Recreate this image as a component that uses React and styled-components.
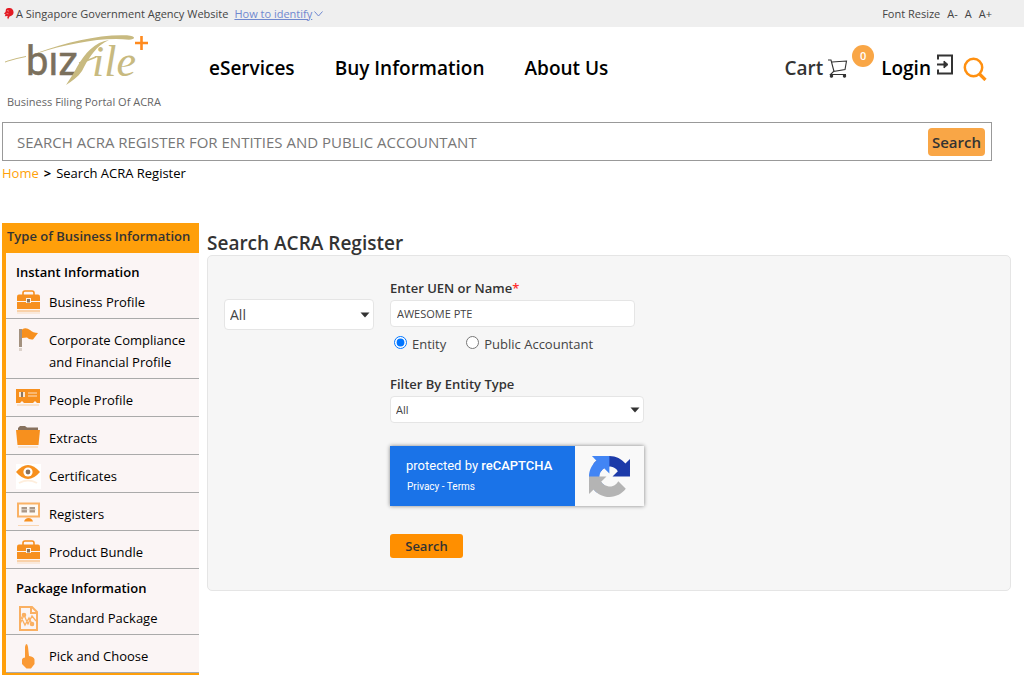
import styled, { createGlobalStyle } from "styled-components";
import { useState } from "react";

const COLOR = {
    Orange: "#ff9f0a",
    Button: "#ff8f00",
    Badge: "#f9a646",
    Icon: "#f7901e",
    Dark: "#333333",
    Pink: "#fbf5f5",
    Panel: "#f6f6f6",
    Line: "#e5e5e5",
};

const BASE_FONT = `"Open Sans", "Noto Sans", sans-serif`;

const GlobalStyle = createGlobalStyle`
    * {
        box-sizing: border-box;
    }
    body {
        margin: 0;
        background-color: #ffffff;
        color: #000000;
        font-family: ${BASE_FONT};
        font-size: 13px;
    }
    button, input, select {
        font-family: inherit;
    }
    a {
        color: inherit;
        text-decoration: none;
    }
`;

//top bar
const TopBar = styled.div`
    display: flex;
    justify-content: space-between;
    align-items: center;
    height: 27px;
    padding: 0 32px 0 4px;
    background-color: #efefef;
    color: #444444;
    font-size: 11px;
`;
const AgencyText = styled.div`
    display: flex;
    align-items: center;
    gap: 2px;
    line-height: 20px;
`;
const IdentifyLink = styled.a`
    display: flex;
    align-items: center;
    gap: 2px;
    margin-left: 4px;
    color: #6f88cf;

    span {
        text-decoration: underline;
    }
`;
const ResizeBox = styled.div`
    display: flex;
    align-items: center;
    gap: 7px;
`;
const ResizeButton = styled.button`
    padding: 0;
    border: none;
    background: none;
    color: inherit;
    font-size: 11px;
    cursor: pointer;
`;

//header
const Header = styled.header`
    display: flex;
    align-items: flex-start;
    height: 95px;
    padding: 8px 36px 0 5px;
`;
const Brand = styled.a`
    display: block;
    width: 204px;
    color: #666666;
    font-size: 11px;
    line-height: 16px;

    svg {
        display: block;
        margin-bottom: 8px;
    }
    span {
        padding-left: 2px;
    }
`;
const Nav = styled.nav`
    display: flex;
    flex: 1;
    gap: 40px;
    padding-top: 19px;
    font-size: 19px;
    font-weight: 600;
    line-height: 28px;
`;
const Tools = styled.div`
    display: flex;
    align-items: center;
    padding-top: 19px;
    font-size: 19px;
    font-weight: 600;
    line-height: 28px;
`;
const CartLink = styled.a`
    display: flex;
    align-items: center;
    gap: 5px;
    position: relative;
    margin-right: 33px;
    color: ${COLOR.Dark};
`;
const CartBadge = styled.span`
    position: absolute;
    top: -9px;
    right: -26px;
    width: 22px;
    height: 22px;
    border-radius: 11px;
    background-color: ${COLOR.Badge};
    color: #ffffff;
    font-size: 11px;
    line-height: 22px;
    text-align: center;
`;
const LoginLink = styled.a`
    display: flex;
    align-items: center;
    gap: 5px;
`;
const IconButton = styled.button`
    display: flex;
    margin-left: 9px;
    padding: 0;
    border: none;
    background: none;
    cursor: pointer;
`;

//register search
const SearchForm = styled.form`
    display: flex;
    align-items: center;
    height: 39px;
    margin: 0 32px 0 2px;
    padding-right: 6px;
    border: 1px solid #999999;
`;
const SearchInput = styled.input`
    flex: 1;
    height: 36px;
    padding: 0 14px;
    border: none;
    outline: none;
    background: none;
    font-size: 15px;

    &::placeholder {
        color: #777777;
        opacity: 1;
    }
`;
const SearchButton = styled.button`
    height: 28px;
    padding: 0 4px;
    border: none;
    border-radius: 4px;
    background-color: ${COLOR.Badge};
    color: ${COLOR.Dark};
    font-size: 15px;
    font-weight: 600;
    cursor: pointer;
`;
const Breadcrumb = styled.nav`
    display: flex;
    gap: 5px;
    margin-bottom: 40px;
    padding: 2px 2px 0;
    line-height: 20px;

    a {
        color: ${COLOR.Orange};
    }
    b {
        font-weight: 700;
    }
`;

//page body
const Columns = styled.div`
    display: flex;
    align-items: flex-start;
    gap: 8px;
    padding: 0 13px 0 2px;
`;
const SideBar = styled.aside`
    flex: 0 0 197px;
    border-left: 4px solid ${COLOR.Orange};
    border-bottom: 2px solid ${COLOR.Orange};
    background-color: ${COLOR.Pink};
`;
const SideTitle = styled.h2`
    margin: 0 0 0 -4px;
    padding: 0 0 4px 5px;
    background-color: ${COLOR.Orange};
    color: ${COLOR.Dark};
    font-size: 13px;
    font-weight: 600;
    line-height: 26px;
    white-space: nowrap;
`;
const GroupTitle = styled.h3`
    margin: 0;
    padding: 10px 0 0 10px;
    font-size: 13px;
    font-weight: 600;
    line-height: 18px;
`;
const SideItem = styled.a`
    display: flex;
    align-items: flex-start;
    gap: 8px;
    padding: 10px 8px 5px 10px;
    border-bottom: 1px solid #aaaaaa;
    line-height: 22px;

    svg {
        flex: none;
        margin: -1px 0 -2px;
    }
`;
const Main = styled.main`
    flex: 1;
`;
const PageTitle = styled.h1`
    margin: 8px 0 0;
    color: ${COLOR.Dark};
    font-size: 19px;
    font-weight: 600;
    line-height: 24px;
`;
const Panel = styled.form`
    display: grid;
    grid-template-columns: 150px minmax(0, 254px);
    gap: 16px;
    align-items: start;
    padding: 22px 16px 32px;
    border: 1px solid ${COLOR.Line};
    border-radius: 5px;
    background-color: ${COLOR.Panel};
    color: #444444;
`;
const SelectBox = styled.div`
    position: relative;
    margin-top: ${props => props.$top || "0"};

    svg {
        position: absolute;
        top: calc(50% - 3px);
        right: 4px;
        pointer-events: none;
    }
`;
const Select = styled.select`
    display: block;
    appearance: none;
    width: 100%;
    height: ${props => props.$height};
    padding: 0 20px 0 5px;
    border: 1px solid ${COLOR.Line};
    border-radius: 4px;
    background-color: #ffffff;
    color: #444444;
    font-size: ${props => props.$size};
`;
const FieldLabel = styled.label`
    display: block;
    padding-bottom: 2px;
    color: ${COLOR.Dark};
    font-size: 13px;
    font-weight: 600;
    line-height: 20px;

    span {
        color: #ff3030;
    }
`;
const NameInput = styled.input`
    display: block;
    width: 245px;
    height: 27px;
    padding: 0 6px;
    border: 1px solid ${COLOR.Line};
    border-radius: 4px;
    color: #444444;
    font-size: 11px;
`;
const RadioRow = styled.div`
    display: flex;
    gap: 20px;
    margin: 6px 0 19px;
    font-size: 13px;
    line-height: 22px;

    label {
        display: flex;
        gap: 5px;
    }
    input {
        width: 13px;
        height: 13px;
        margin: 3px 0 0 4px;
    }
    label + label input {
        margin-left: 0;
    }
`;
const Captcha = styled.div`
    display: flex;
    height: 60px;
    margin: 23px 0 28px;
    background-color: #f9f9f9;
    box-shadow: 0 0 4px #808080;
    font-family: Roboto, sans-serif;
`;
const CaptchaText = styled.div`
    flex: 1;
    padding: 9px 16px;
    background-color: #1a73e8;
    color: #ffffff;
    font-size: 13px;
    line-height: 21px;

    b {
        font-weight: 500;
    }
    div {
        padding-left: 1px;
        font-size: 10px;
    }
`;
const CaptchaLogo = styled.div`
    display: flex;
    justify-content: center;
    align-items: center;
    width: 69px;
`;
const SubmitButton = styled.button`
    width: 73px;
    height: 24px;
    padding: 0;
    border: none;
    border-radius: 3px;
    background-color: ${COLOR.Button};
    color: ${COLOR.Dark};
    font-size: 13px;
    font-weight: 600;
    cursor: pointer;
`;

function Lion() {
    return (
        <svg width="10" height="12" viewBox="0 0 10 12" aria-hidden="true">
            <path d="M2 1 Q5 -1 8 .8 Q10.500 3.500 9 6.500 Q7.500 8 5.500 8.500 L4 11.500 L3.200 9 L4 8 L.8 8.200 L1.500 6.500 L0 5.500 L1.500 4 Z" fill="#e31b23" />
            <path d="M3 2.500 l2 .7 M2.500 5.500 l2 .3" stroke="#f7b5b5" strokeWidth=".6" />
        </svg>
    );
}

function BizLogo() {
    return (
        <svg width="146" height="51" viewBox="0 0 146 51" role="img" aria-label="bizfile+">
            <text x="21" y="40" fontFamily="Roboto, sans-serif" fontSize="40" fill="#7b705c" stroke="#7b705c" strokeWidth=".5">bız</text>
            <text x="87" y="41" fontFamily="Liberation Serif, serif" fontSize="44" fontStyle="italic" fill="#c8ba80">ile</text>
            <path d="M0 26.500 Q10 23 21 21 L21 22 Q10 24 0 27.500 Z" fill="#c8ba80" />
            <path d="M33 17.500 C62 7 96 -1 122 .3 C131 1 131 4 124 4.800 C98 1.800 62 9 33 18.200 Z" fill="#c8ba80" />
            <path d="M104 5 C92 10 84 22 77 36 C73 42 67 46 61 50 C64 45 69 38 72 32 C80 18 90 7 104 5 Z" fill="#c8ba80" />
            <path d="M74 28 Q82 26 91 22" stroke="#c8ba80" strokeWidth="1.500" fill="none" />
            <path d="M136.500 1 V15 M130 8 H143" stroke="#ff8a1e" strokeWidth="2.600" />
        </svg>
    );
}

function CartIcon() {
    return (
        <svg width="20" height="20" viewBox="0 0 20 20" fill="none" stroke="#333333" strokeWidth="1.100" aria-hidden="true">
            <path d="M0 2 H3 L6 13.500 M4 4 L18.500 3 L17 11.500 L5.500 13.500 L2.500 16.500 H18" />
            <circle cx="3.500" cy="18" r="1.200" fill="#333333" />
            <circle cx="16.500" cy="18" r="1.200" fill="#333333" />
        </svg>
    );
}

function LoginIcon() {
    return (
        <svg width="18" height="28" viewBox="0 0 18 28" fill="none" stroke="#333333" strokeWidth="2" aria-hidden="true">
            <path d="M2 5.500 V1.500 H16 V19.500 H2 V15.500" />
            <path d="M1 10.500 H10" />
            <path d="M8 7 L12 10.500 L8 14 Z" fill="#333333" strokeWidth="1" />
        </svg>
    );
}

function SearchIcon() {
    return (
        <svg width="25" height="25" viewBox="0 0 25 25" fill="none" stroke="#ff9010" aria-hidden="true">
            <circle cx="10.500" cy="11.500" r="8.700" strokeWidth="2.500" />
            <path d="M16.500 18 L22.500 24" strokeWidth="3.200" />
        </svg>
    );
}

function Arrow() {
    return (
        <svg width="10" height="6" viewBox="0 0 10 6" aria-hidden="true">
            <path d="M.5 .5 H9.500 L5 5.500 Z" fill="#333333" />
        </svg>
    );
}

function ItemIcon({ kind }) {
    const main = COLOR.Icon;
    return (
        <svg width="25" height="25" viewBox="0 0 25 25" aria-hidden="true">
            {kind === "case" && (
                <>
                    <path d="M7 5 V3 Q7 1 9 1 H16 Q18 1 18 3 V5" fill="none" stroke={main} strokeWidth="1.600" />
                    <path d="M3 4.500 H22 Q24 4.500 24 6.500 V11 H1 V6.500 Q1 4.500 3 4.500 Z" fill={main} />
                    <path d="M1 12 H24 V19 H1 Z" fill={main} />
                    <path d="M10 8 H15 V13 H10 Z" fill="#fff3e4" />
                    <path d="M11 9 H14 V12.500 H11 Z" fill="#8a7663" />
                    <path d="M1 20 H24 V22 H1 Z" fill={main} opacity=".35" />
                    <path d="M1 22 H24 V24 H1 Z" fill={main} opacity=".12" />
                </>
            )}
            {kind === "flag" && (
                <>
                    <path d="M3 1 H6 V19 H3 Z" fill="#a3917f" />
                    <path d="M3 20 H6 V23 H3 Z" fill="#a3917f" opacity=".35" />
                    <path d="M6 1.500 Q10 -1 14 2 Q17 5 22 5 L17 11.500 Q13 12 11 9.500 L6 10 Z" fill={main} />
                </>
            )}
            {kind === "card" && (
                <>
                    <path d="M0 1 H24 V15 H21 L19 13 L17 15 H8 L6 13 L4 15 H0 Z" fill={main} />
                    <path d="M3 4 H9 V9 H3 Z" fill="#fde6cc" />
                    <path d="M5 4 H7 V9 H5 Z" fill="#8a7663" />
                    <path d="M12 5 H21 M12 8 H21" stroke="#fbc58c" strokeWidth="1.300" />
                    <path d="M1 16 H23 V18 H1 Z" fill={main} opacity=".2" />
                </>
            )}
            {kind === "folder" && (
                <>
                    <path d="M2 4 V2 L4 0 H9 L11 1.500 H22 V4 Z" fill="#87715e" />
                    <path d="M0 4 H24 L22.500 19 H1.500 Z" fill={main} />
                    <path d="M2 20 H22 V22 H2 Z" fill={main} opacity=".2" />
                </>
            )}
            {kind === "eye" && (
                <>
                    <path d="M0 0 H25 V25 H0 Z" fill="#ffffff" />
                    <path d="M0 8 Q6 1 12 1 Q18 1 24 8 Q18 15 12 15 Q6 15 0 8 Z" fill={main} />
                    <circle cx="12" cy="8" r="4.600" fill="#ffffff" />
                    <circle cx="12" cy="8" r="2.400" fill="#87715e" />
                    <path d="M3 19 Q12 14 21 19" fill="none" stroke={main} strokeWidth="2" opacity=".15" />
                </>
            )}
            {kind === "screen" && (
                <>
                    <path d="M2 1.500 H23 V14.500 H2 Z" fill="#fffaf4" stroke="#fab266" strokeWidth="2" />
                    <path d="M5.500 5 H11 V10.500 H5.500 Z M13.500 5 H19 V10.500 H13.500 Z" fill="#a99788" />
                    <path d="M5 7.700 H20" stroke="#e5dcd4" strokeWidth=".8" />
                    <path d="M8 19.500 Q9 16 12.500 16 Q16 16 17 19.500 Z" fill={main} />
                    <path d="M2 23.500 H23" stroke={main} opacity=".3" />
                </>
            )}
            {kind === "chart" && (
                <g fill="none" stroke="#fab062" strokeWidth="2">
                    <path d="M4 1 H16 L21 6 V24 H4 Z M15 1 V7 H21" />
                    <path d="M4 18 L8 9 L12 18 L16 10 L20 15 M4 9 L9 19 L13 12 L17 20" strokeWidth="1.300" />
                    <circle cx="8" cy="9" r="1.300" />
                    <circle cx="16" cy="18" r="1.300" />
                </g>
            )}
            {kind === "hand" && (
                <path d="M10.500 0 Q11.500 0 12 3 L13 12 Q18 12.500 18.500 15.500 V20 L15 24.500 H10.500 L6 20 V15.500 Q6.500 13.500 9 13.500 V3 Q9.500 0 10.500 0 Z" fill="#fa9a35" />
            )}
        </svg>
    );
}

function CaptchaMark() {
    return (
        <svg width="41" height="41" viewBox="0 0 64 64" aria-hidden="true">
            <path d="M64 31.955l-.033-1.370V4.687l-7.160 7.160C50.948 4.674 42.033.093 32.050.093c-10.400 0-19.622 4.960-25.458 12.640l11.736 11.860a15.550 15.550 0 0 1 4.754-5.334c2.050-1.600 4.952-2.906 8.968-2.906.485 0 .860.057 1.135.163 4.976.393 9.288 3.140 11.828 7.124l-8.307 8.307c10.522-.041 22.407-.066 27.295.005" fill="#1c3aa9" />
            <path d="M31.862.094l-1.370.033H4.594l7.160 7.160C4.580 13.147 0 22.060 0 32.046c0 10.400 4.960 19.622 12.640 25.458L24.500 45.768a15.550 15.550 0 0 1-5.334-4.754c-1.600-2.050-2.906-4.952-2.906-8.968 0-.485.057-.860.163-1.135.393-4.976 3.140-9.288 7.124-11.828l8.307 8.307c.041-10.522.066-22.407-.005-27.295" fill="#4285f4" />
            <path d="M.001 32.045l.033 1.370v25.898l7.160-7.160c5.860 7.173 14.774 11.754 24.760 11.754 10.400 0 19.622-4.960 25.458-12.640l-11.736-11.860a15.550 15.550 0 0 1-4.754 5.334c-2.050 1.600-4.952 2.906-8.968 2.906-.485 0-.860-.057-1.135-.163-4.976-.393-9.288-3.140-11.828-7.124l8.307-8.307c-10.522.040-22.400.066-27.295-.005" fill="#b4b4b4" />
        </svg>
    );
}

const instantItems = [
    { kind: "case", name: "Business Profile" },
    { kind: "flag", name: "Corporate Compliance and Financial Profile" },
    { kind: "card", name: "People Profile" },
    { kind: "folder", name: "Extracts" },
    { kind: "eye", name: "Certificates" },
    { kind: "screen", name: "Registers" },
    { kind: "case", name: "Product Bundle" },
];
const packageItems = [
    { kind: "chart", name: "Standard Package" },
    { kind: "hand", name: "Pick and Choose" },
];

function ItemList({ items }) {
    return items.map((item) => (
        <SideItem key={item.name} href="#">
            <ItemIcon kind={item.kind} />
            <span>{item.name}</span>
        </SideItem>
    ));
}

function RegisterForm() {
    const [name, setName] = useState("AWESOME PTE");
    const [type, setType] = useState("entity");

    return (
        <Panel onSubmit={(e) => e.preventDefault()}>
            <SelectBox $top="21px">
                <Select $height="31px" $size="14px" aria-label="Search in">
                    <option>All</option>
                </Select>
                <Arrow />
            </SelectBox>
            <div>
                <FieldLabel htmlFor="uen">Enter UEN or Name<span>*</span></FieldLabel>
                <NameInput id="uen" value={name} onChange={(e) => setName(e.target.value)} />
                <RadioRow>
                    <label>
                        <input type="radio" name="type" checked={type === "entity"} onChange={() => setType("entity")} />
                        Entity
                    </label>
                    <label>
                        <input type="radio" name="type" checked={type === "accountant"} onChange={() => setType("accountant")} />
                        Public Accountant
                    </label>
                </RadioRow>
                <FieldLabel htmlFor="entityType">Filter By Entity Type</FieldLabel>
                <SelectBox>
                    <Select id="entityType" $height="27px" $size="11px">
                        <option>All</option>
                    </Select>
                    <Arrow />
                </SelectBox>
                <Captcha>
                    <CaptchaText>
                        protected by <b>reCAPTCHA</b>
                        <div><a href="#">Privacy</a> - <a href="#">Terms</a></div>
                    </CaptchaText>
                    <CaptchaLogo>
                        <CaptchaMark />
                    </CaptchaLogo>
                </Captcha>
                <SubmitButton type="submit">Search</SubmitButton>
            </div>
        </Panel>
    );
}

function App() {
    return (
        <>
            <GlobalStyle />
            <TopBar>
                <AgencyText>
                    <Lion />
                    A Singapore Government Agency Website
                    <IdentifyLink href="#">
                        <span>How to identify</span>
                        <svg width="9" height="6" viewBox="0 0 9 6" fill="none" stroke="#6f88cf" aria-hidden="true">
                            <path d="M.5 .5 L4.500 5 L8.500 .5" />
                        </svg>
                    </IdentifyLink>
                </AgencyText>
                <ResizeBox>
                    Font Resize
                    <ResizeButton>A-</ResizeButton>
                    <ResizeButton>A</ResizeButton>
                    <ResizeButton>A+</ResizeButton>
                </ResizeBox>
            </TopBar>
            <Header>
                <Brand href="#">
                    <BizLogo />
                    <span>Business Filing Portal Of ACRA</span>
                </Brand>
                <Nav>
                    <a href="#">eServices</a>
                    <a href="#">Buy Information</a>
                    <a href="#">About Us</a>
                </Nav>
                <Tools>
                    <CartLink href="#">
                        Cart
                        <CartIcon />
                        <CartBadge>0</CartBadge>
                    </CartLink>
                    <LoginLink href="#">
                        Login
                        <LoginIcon />
                    </LoginLink>
                    <IconButton aria-label="Search site">
                        <SearchIcon />
                    </IconButton>
                </Tools>
            </Header>
            <SearchForm onSubmit={(e) => e.preventDefault()}>
                <SearchInput
                    aria-label="Search ACRA register"
                    placeholder="SEARCH ACRA REGISTER FOR ENTITIES AND PUBLIC ACCOUNTANT"
                />
                <SearchButton type="submit">Search</SearchButton>
            </SearchForm>
            <Breadcrumb>
                <a href="#">Home</a>
                <b>&gt;</b>
                <span>Search ACRA Register</span>
            </Breadcrumb>
            <Columns>
                <SideBar>
                    <SideTitle>Type of Business Information</SideTitle>
                    <GroupTitle>Instant Information</GroupTitle>
                    <ItemList items={instantItems} />
                    <GroupTitle>Package Information</GroupTitle>
                    <ItemList items={packageItems} />
                </SideBar>
                <Main>
                    <PageTitle>Search ACRA Register</PageTitle>
                    <RegisterForm />
                </Main>
            </Columns>
        </>
    );
}

export default App;
